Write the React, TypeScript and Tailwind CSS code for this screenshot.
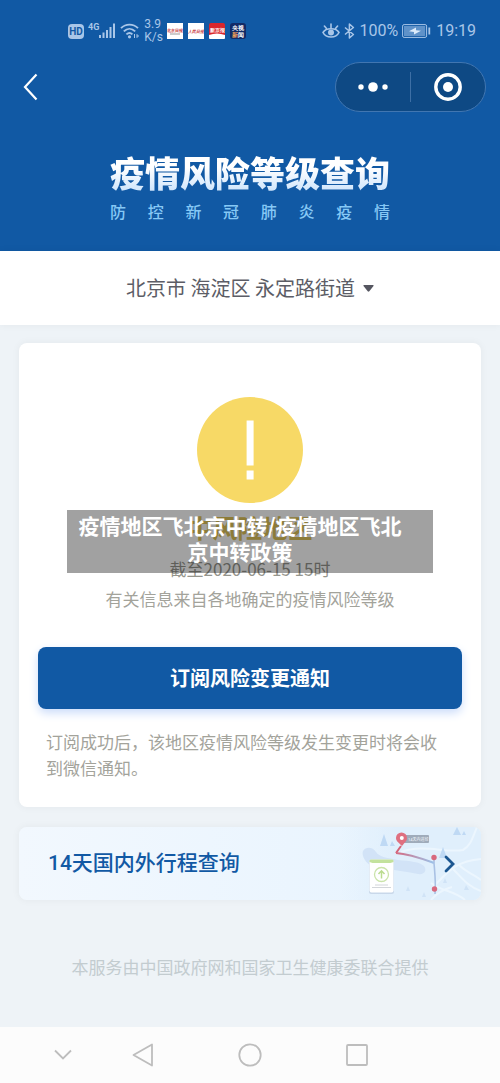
import type { ReactNode } from 'react';

const IconSignal = () => (
  <svg width="17" height="16" viewBox="0 0 17 16" fill="#a9c6e8" aria-hidden="true">
    <rect x="0" y="12" width="2" height="3" />
    <rect x="3.5" y="9.5" width="2" height="5.5" />
    <rect x="7" y="7" width="2" height="8" />
    <rect x="10.5" y="4" width="2" height="11" />
    <rect x="14" y="0.5" width="2" height="14.5" />
  </svg>
);

const IconWifi = () => (
  <svg width="20" height="16" viewBox="0 0 20 16" fill="none" stroke="#a9c6e8" strokeWidth="1.9" aria-hidden="true">
    <path d="M1 5.2C5.8 0.4 13.2 0.4 18 5.2" />
    <path d="M3.8 8.4C7.2 5 11.8 5 15.2 8.4" />
    <path d="M6.4 11.4C8.4 9.6 10.6 9.6 12.4 11.4" />
    <circle cx="9.5" cy="13.8" r="1.6" fill="#a9c6e8" stroke="none" />
    <path d="M14.5 11v4M17 11.500l1.500 1.500-1.500 1.500z" strokeWidth="1" />
  </svg>
);

const IconEye = () => (
  <svg width="18" height="16" viewBox="0 0 18 16" fill="none" stroke="#a9c6e8" strokeWidth="1.6" strokeLinecap="round" aria-hidden="true">
    <path d="M1 9.5C4 4.5 14 4.5 17 9.5 14 15.5 4 15.5 1 9.5z" />
    <circle cx="9" cy="9.5" r="3" fill="#a9c6e8" stroke="none" />
    <path d="M9 5V1M4.5 5.5L2.4 3M13.5 5.5L15.6 3" />
  </svg>
);

const IconBluetooth = () => (
  <svg width="11" height="16" viewBox="0 0 11 16" fill="none" stroke="#a9c6e8" strokeWidth="1.5" strokeLinejoin="round" aria-hidden="true">
    <path d="M1 4.5L9.4 11.5 5.4 15V1l4 3.5L1 11.5" />
  </svg>
);

const IconBattery = () => (
  <svg width="29" height="14" viewBox="0 0 29 14" aria-hidden="true">
    <rect x="0.6" y="0.6" width="24" height="12.8" rx="1.5" fill="none" stroke="#a9c6e8" />
    <rect x="2" y="2" width="21.2" height="10" fill="#5f92c9" />
    <path d="M7 7.2L14 3.6v2.6l5 .6-7 3.8V8z" fill="#dcebfa" />
    <rect x="26.4" y="3.5" width="1.8" height="7" fill="#a9c6e8" />
  </svg>
);

const IconTarget = () => (
  <svg width="30" height="30" viewBox="0 0 30 30" fill="none" aria-hidden="true">
    <circle cx="15" cy="15" r="12.2" stroke="#fff" strokeWidth="3.4" />
    <circle cx="15" cy="15" r="5" fill="#fff" />
  </svg>
);

const IconAlert = () => (
  <svg width="106" height="106" viewBox="0 0 106 106" role="img" aria-label="中风险">
    <circle cx="53" cy="53" r="53" fill="#f7d966" />
    <rect x="49.6" y="23.5" width="7" height="45" fill="#fff" />
    <rect x="49.6" y="73.5" width="7" height="9" fill="#fff" />
  </svg>
);

const RouteMap = () => (
  <svg width="140" height="73" viewBox="0 0 140 73" aria-hidden="true">
    <defs>
      <linearGradient id="fade" x1="0" x2="1" y1="0" y2="0">
        <stop offset="0" stopColor="#e0effc" stopOpacity="0" />
        <stop offset="0.4" stopColor="#e0effc" />
      </linearGradient>
      <linearGradient id="route" gradientUnits="userSpaceOnUse" x1="53" x2="91" y1="0" y2="0">
        <stop offset="0" stopColor="#d9657a" />
        <stop offset="1" stopColor="#9dbfe6" />
      </linearGradient>
    </defs>
    <rect width="140" height="73" fill="url(#fade)" />
    {/* Lake and roads */}
    <path d="M22 24c3-5 10-4 13 1 3 5 12 6 22 8 12 1 22 2 26 6 3 4 1 9-6 8-12-2-26-5-40-6-10-1-17-11-15-17z" fill="#d2e3f7" />
    <g fill="none" stroke="#ecf6fe" strokeWidth="2">
      <path d="M60 25c22-8 44 1 62-2 8-4 10-14 14-23M90 56c10 8 24 8 34 17M118 38c8 8 15 9 22 15M92 60c14-14 22-26 48-28M90 73c5-6 10-10 21-13M112 42c8 8 15 18 28 22" />
    </g>
    {/* Trees */}
    <g fill="#bfd9f4">
      <path d="M43 7l4 12h-8zM51 14l3 5h-5zM116 0l4 8h-8zM123 4l2 4h-4zM102 20l4 11h-8z" />
      <path d="M67 59l2 5h-4zM104 51l2 5h-4zM125 58l3 5h-5zM83 65l2 5h-4z" fill="#d0e3f6" />
    </g>
    <rect x="62" y="8" width="26" height="8" rx="1" fill="#9fabba" />
    <text x="67" y="14" fontSize="4" fill="#e9eef4">14天内途径</text>
    <path d="M60 19l-5 7" fill="none" stroke="#d56277" strokeWidth="2" />
    <path d="M55 26c14 1 27 6 38 10" fill="none" stroke="url(#route)" strokeWidth="2" />
    <path d="M93 30v6c1 12 2 20 1 31" fill="none" stroke="#a9c1e4" strokeWidth="1.6" />
    <path d="M61 19c-4-4-6-5-6-8a5.500 5.500 0 0 1 11 0c0 3-2 4-5 8z" fill="#df6f80" />
    <circle cx="60.800" cy="11" r="2" fill="#fff" />
    <circle cx="93" cy="30.500" r="2.700" fill="#d8697e" />
    <circle cx="93.500" cy="62" r="2.700" fill="#d8697e" />
    {/* Health pass */}
    <rect x="28" y="33" width="25" height="34" rx="2" fill="#c9d8ea" />
    <rect x="28.500" y="32.500" width="24" height="33" rx="2" fill="#fff" />
    <path d="M28.500 35v-1c0-1 1-1.500 2-1.500h20c1 0 2 .5 2 1.500v1l-3 1h-18z" fill="#c3e29d" />
    <circle cx="40.500" cy="47.500" r="7" fill="none" stroke="#cbe4aa" strokeWidth="1.300" />
    <path d="M40.500 51.500v-7M37.500 47l3-3.200 3 3.200" fill="none" stroke="#bbdc90" strokeWidth="1.500" />
    <path d="M34 58h13M31 60.500h19" stroke="#d3d6da" strokeWidth="1" />
  </svg>
);

const AppBadge = ({ label, children }: { label: string; children: ReactNode }) => (
  <svg width="16" height="16" viewBox="0 0 16 16" role="img" aria-label={label} textAnchor="middle" fontWeight="700">
    {children}
  </svg>
);

const StatusBar = () => (
  <div className="flex h-[62px] items-center justify-between pr-6 pl-[68px] font-[Roboto,sans-serif] text-[#a9c6e8]">
    <div className="flex items-center gap-1">
      <span className="flex h-[15px] w-4 items-center justify-center rounded-sm bg-[#a9c6e8] text-[10px] font-bold text-[#1159a4]">HD</span>
      <div className="flex items-center">
        <span className="mb-2 text-[9px] leading-3 font-bold">4G</span>
        <IconSignal />
      </div>
      <IconWifi />
      <span className="text-xs leading-[13px]">3.9<br />K/s</span>
      <div className="flex gap-[5px]">
        <AppBadge label="北京日报">
          <rect width="16" height="16" fill="#fff" />
          <text x="8" y="9" fontSize="4" fill="#c12f35">北京日报</text>
          <rect x="3" y="10.500" width="10" height="1" fill="#9a9a9a" />
        </AppBadge>
        <AppBadge label="人民日报">
          <rect width="16" height="16" fill="#fff" />
          <text x="8" y="10" fontSize="4" fontStyle="italic" fill="#c8353a">人民日报</text>
        </AppBadge>
        <AppBadge label="新京报">
          <rect width="16" height="16" rx="2" fill="#d9262c" />
          <path d="M0 12q8-3 16 0v3a1 1 0 0 1-1 1H1a1 1 0 0 1-1-1z" fill="#fff" />
          <text x="8" y="9" fontSize="5" fill="#fff">新京报</text>
        </AppBadge>
        <AppBadge label="央视新闻">
          <rect width="16" height="16" rx="3" fill="#122a66" />
          <text x="8" y="7" fontSize="6" fill="#fff">央视</text>
          <text x="8" y="14" fontSize="6" fill="#fff"><tspan fill="#f3a05a">新</tspan>闻</text>
        </AppBadge>
      </div>
    </div>
    <div className="flex items-center gap-1 text-base">
      <IconEye />
      <IconBluetooth />
      <span>100%</span>
      <IconBattery />
      <span className="ml-px">19:19</span>
    </div>
  </div>
);

export default function App() {
  return (
    <div className="flex min-h-screen flex-col bg-[#eef3f7] font-['Noto_Sans_CJK_SC',sans-serif]">
      <header className="bg-[#1159a4] pb-7">
        <StatusBar />
        <div className="flex items-center justify-between pr-[14px] pl-5">
          <button type="button" aria-label="返回" className="flex h-10 w-6 items-center">
            <svg width="20" height="28" viewBox="0 0 20 28" fill="none" stroke="#fff" strokeWidth="2.2" aria-hidden="true">
              <path d="M16.500 1.500L5 14l11.500 12.500" />
            </svg>
          </button>
          <div className="flex h-[50px] w-[151px] items-center rounded-full border border-[#4176b1] bg-[#0e4984]">
            <button type="button" aria-label="更多" className="flex flex-1 justify-center">
              <svg width="30" height="10" viewBox="0 0 30 10" fill="#fff" aria-hidden="true">
                <circle cx="3" cy="5" r="2.700" />
                <circle cx="15" cy="5" r="4.800" />
                <circle cx="27" cy="5" r="2.700" />
              </svg>
            </button>
            <span className="h-[30px] w-px bg-[#3d6fa5]" />
            <button type="button" aria-label="关闭" className="flex flex-1 justify-center">
              <IconTarget />
            </button>
          </div>
        </div>
        <div className="mx-auto mt-[38px] w-fit">
          <h1 className="bg-linear-to-b from-white from-40% to-[#c9e2fb] bg-clip-text text-[35px] leading-[44px] font-black text-transparent">
            疫情风险等级查询
          </h1>
          <p className="mt-[5px] flex justify-between text-base leading-6 font-medium text-[#86c8f5]">
            {[...'防控新冠肺炎疫情'].map((ch) => (
              <span key={ch}>{ch}</span>
            ))}
          </p>
        </div>
      </header>

      <button type="button" className="flex h-[74px] items-center justify-center gap-2 bg-white text-xl text-[#5c5d66] shadow-[0_0_8px_rgba(0,0,0,0.05)]">
        北京市 海淀区 永定路街道
        <svg width="11" height="7" viewBox="0 0 11 7" fill="#555660" aria-hidden="true">
          <path d="M1 0h9q1 0 .5 1L6.300 6.300q-.8.800-1.600 0L.5 1Q0 0 1 0z" />
        </svg>
      </button>

      <main className="flex-1 px-[19px] pt-[18px]">
        <section className="relative rounded-lg bg-white px-[19px] pt-[54px] pb-[26px] text-center text-[17px] text-[#a3a39b] shadow-[0_0_8px_rgba(0,0,0,0.05)]">
          <div className="flex justify-center">
            <IconAlert />
          </div>
          <h2 className="mt-[6px] text-[25px] leading-9 font-bold text-[#dec359]">中风险地区</h2>
          <p className="mt-3 leading-6 text-[#96968e]">截至2020-06-15 15时</p>
          <p className="mt-[6px] leading-6">有关信息来自各地确定的疫情风险等级</p>
          <button type="button" className="mt-9 h-[62px] w-full rounded-lg bg-[#1159a4] text-xl font-bold text-white shadow-[0_4px_10px_#cbdcfa]">
            订阅风险变更通知
          </button>
          <p className="mt-5 pr-5 pl-2 text-left leading-[26px]">
            订阅成功后，该地区疫情风险等级发生变更时将会收到微信通知。
          </p>

          {/* Caption band over the card */}
          <div className="absolute inset-x-12 top-[167px] bg-black/37 pt-[2px] pr-5 pb-[9px] text-[21px] leading-[26px] font-bold text-white">
            疫情地区飞北京中转/疫情地区飞北<br />京中转政策
          </div>
        </section>

        <a href="#trip" className="mt-5 flex h-[73px] items-center justify-between overflow-hidden rounded-lg bg-linear-to-r from-[#f2f8fe] to-[#e6f3fe] pl-[29px] font-[Roboto,'Noto_Sans_CJK_SC',sans-serif] text-[21px] font-medium text-[#1159a4] shadow-[0_0_8px_rgba(0,0,0,0.05)]">
          14天国内外行程查询
          <span className="relative">
            <RouteMap />
            <svg className="absolute top-7 right-6" width="14" height="18" viewBox="0 0 14 18" fill="none" stroke="#1b5690" strokeWidth="2.800" strokeLinecap="round" aria-hidden="true">
              <path d="M3 2l7 7-7 7" />
            </svg>
          </span>
        </a>

        <p className="mt-[55px] mb-[47px] text-center text-[17px] leading-6 text-[#c3ccd0]">
          本服务由中国政府网和国家卫生健康委联合提供
        </p>
      </main>

      <nav className="flex h-14 items-center bg-[#fcfcfc] px-[9px]">
        <button type="button" aria-label="收起" className="flex w-[107px] justify-center">
          <svg width="20" height="12" viewBox="0 0 20 12" fill="none" stroke="#bdbdbd" strokeWidth="1.800" aria-hidden="true">
            <path d="M2 1.500l8 8 8-8" />
          </svg>
        </button>
        <div className="flex flex-1 justify-between px-4">
          <button type="button" aria-label="返回上一页">
            <svg width="22" height="24" viewBox="0 0 22 24" fill="none" stroke="#bdbdbd" strokeWidth="1.800" strokeLinejoin="round" aria-hidden="true">
              <path d="M20 1.500v21L1.500 12z" />
            </svg>
          </button>
          <button type="button" aria-label="主页">
            <svg width="24" height="24" viewBox="0 0 24 24" fill="none" stroke="#bdbdbd" strokeWidth="1.800" aria-hidden="true">
              <circle cx="12" cy="12" r="10.700" />
            </svg>
          </button>
          <button type="button" aria-label="最近任务">
            <svg width="22" height="22" viewBox="0 0 22 22" fill="none" stroke="#bdbdbd" strokeWidth="1.800" aria-hidden="true">
              <rect x="1" y="1" width="20" height="20" rx="1" />
            </svg>
          </button>
        </div>
        <div className="w-[107px]" />
      </nav>
    </div>
  );
}
